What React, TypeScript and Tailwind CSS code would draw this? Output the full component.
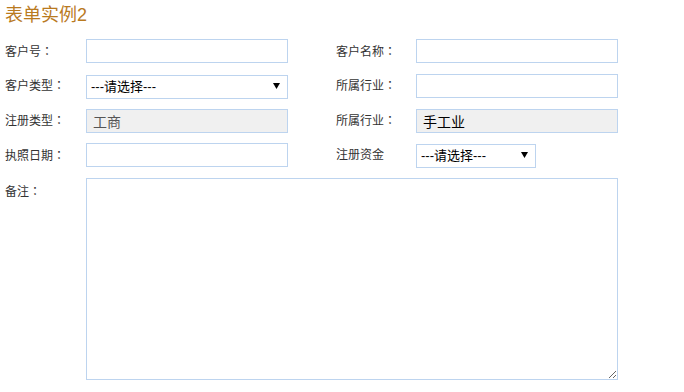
import { useState } from 'react'

const font = { fontFamily: '"Liberation Sans", "Noto Sans CJK SC", sans-serif' }

function Label({ text, colon = true, wide }: { text: string; colon?: boolean; wide?: boolean }) {
  return (
    <label className={`${wide ? 'w-[80px]' : 'w-[81px]'} shrink-0 text-[12px] text-[#333]`}>
      {text}
      {colon && <span className="font-['Noto_Sans_CJK_TC',sans-serif]">：</span>}
    </label>
  )
}

function TextInput({ value, disabled, dark }: { value?: string; disabled?: boolean; dark?: boolean }) {
  return (
    <input
      type="text"
      defaultValue={value}
      disabled={disabled}
      className={`h-[24px] w-[202px] border border-[#bdd4ef] px-[6px] text-[14px] outline-none ${
        disabled ? 'bg-[#f0f0f0]' : 'bg-white'
      } ${dark ? 'text-black' : 'text-[#555]'}`}
    />
  )
}

function Select({ width }: { width: string }) {
  const [value, setValue] = useState('')
  return (
    <div className={`relative h-[24px] ${width}`}>
      <select
        value={value}
        onChange={(e) => setValue(e.target.value)}
        className="h-full w-full appearance-none border border-[#bdd4ef] bg-white pl-[4px] text-[13px] text-black outline-none"
      >
        <option value="">---请选择---</option>
        <option value="1">选项一</option>
        <option value="2">选项二</option>
      </select>
      <svg className="pointer-events-none absolute right-[8px] top-[9px]" width="7" height="6" viewBox="0 0 7 6">
        <path d="M0 0h7L3.5 6z" fill="#000" />
      </svg>
    </div>
  )
}

export default function App() {
  return (
    <div className="min-h-screen bg-white pl-[5px] pt-[3px]" style={font}>
      <h2 className="text-[18px] leading-[24px] text-[#b97a1f]">表单实例2</h2>

      <form className="mt-[12px] flex flex-col gap-[10.75px]">
        <div className="flex items-center">
          <Label text="客户号" />
          <TextInput />
          <div className="w-[48px]" />
          <Label text="客户名称" wide />
          <TextInput />
        </div>

        <div className="flex items-center">
          <Label text="客户类型" />
          <Select width="w-[202px]" />
          <div className="w-[48px]" />
          <Label text="所属行业" wide />
          <TextInput />
        </div>

        <div className="flex items-center">
          <Label text="注册类型" />
          <TextInput value="工商" disabled />
          <div className="w-[48px]" />
          <Label text="所属行业" wide />
          <TextInput value="手工业" disabled dark />
        </div>

        <div className="flex items-center">
          <Label text="执照日期" />
          <TextInput />
          <div className="w-[48px]" />
          <Label text="注册资金" colon={false} wide />
          <Select width="w-[120px]" />
        </div>

        <div className="flex items-start">
          <label className="w-[81px] shrink-0 pt-[4px] text-[12px] text-[#333]">
            备注<span className="font-['Noto_Sans_CJK_TC',sans-serif]">：</span>
          </label>
          <textarea className="h-[202px] w-[532px] border border-[#bdd4ef] bg-white outline-none" />
        </div>
      </form>
    </div>
  )
}
